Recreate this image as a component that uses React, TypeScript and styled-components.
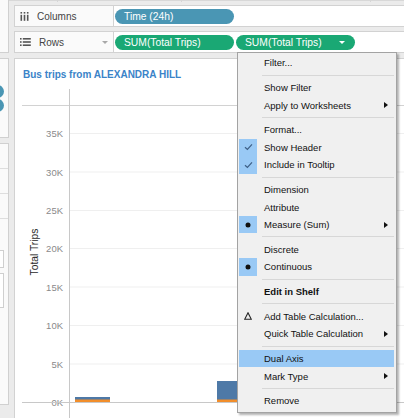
import styled, { createGlobalStyle } from 'styled-components'

const GlobalStyle = createGlobalStyle`
  html, body {
    margin: 0;
    padding: 0;
    background: #ebebeb;
  }
  body {
    font-family: "Liberation Sans", Arial, sans-serif;
  }
`

type Mark = 'check' | 'dot' | 'delta'

interface MenuEntry {
  label?: string
  sep?: boolean
  mark?: Mark
  sub?: boolean
  bold?: boolean
  active?: boolean
}

const menu: MenuEntry[] = [
  { label: 'Filter...' },
  { sep: true },
  { label: 'Show Filter' },
  { label: 'Apply to Worksheets', sub: true },
  { sep: true },
  { label: 'Format...' },
  { label: 'Show Header', mark: 'check' },
  { label: 'Include in Tooltip', mark: 'check' },
  { sep: true },
  { label: 'Dimension' },
  { label: 'Attribute' },
  { label: 'Measure (Sum)', mark: 'dot', sub: true },
  { sep: true },
  { label: 'Discrete' },
  { label: 'Continuous', mark: 'dot' },
  { sep: true },
  { label: 'Edit in Shelf', bold: true },
  { sep: true },
  { label: 'Add Table Calculation...', mark: 'delta' },
  { label: 'Quick Table Calculation', sub: true },
  { sep: true },
  { label: 'Dual Axis', active: true },
  { label: 'Mark Type', sub: true },
  { sep: true },
  { label: 'Remove' },
]

const ticks = [
  { label: '35K', y: 133.5 },
  { label: '30K', y: 172 },
  { label: '25K', y: 210.5 },
  { label: '20K', y: 248.5 },
  { label: '15K', y: 287 },
  { label: '10K', y: 325.5 },
  { label: '5K', y: 364 },
]

const bars = [
  { x: 75, w: 35, top: 397 },
  { x: 217, w: 30, top: 381 },
]

const ColumnsIcon = () => (
  <svg width="9" height="9" viewBox="0 0 9 9">
    <rect x="0.5" y="0" width="1.6" height="1.6" fill="#555" />
    <rect x="3.7" y="0" width="1.6" height="1.6" fill="#555" />
    <rect x="6.9" y="0" width="1.6" height="1.6" fill="#555" />
    <rect x="0.5" y="2.8" width="1.6" height="6" fill="#555" />
    <rect x="3.7" y="2.8" width="1.6" height="6" fill="#555" />
    <rect x="6.9" y="2.8" width="1.6" height="6" fill="#555" />
  </svg>
)

const RowsIcon = () => (
  <svg width="11" height="8" viewBox="0 0 11 8">
    <rect x="0" y="0" width="1.6" height="1.6" fill="#555" />
    <rect x="0" y="3.2" width="1.6" height="1.6" fill="#555" />
    <rect x="0" y="6.4" width="1.6" height="1.6" fill="#555" />
    <rect x="2.8" y="0" width="8" height="1.6" fill="#555" />
    <rect x="2.8" y="3.2" width="8" height="1.6" fill="#555" />
    <rect x="2.8" y="6.4" width="8" height="1.6" fill="#555" />
  </svg>
)

const MarkIcon = ({ mark }: { mark: Mark }) => {
  if (mark === 'check')
    return (
      <svg width="9" height="8" viewBox="0 0 9 8">
        <polyline points="1,4.2 3.4,6.5 8,1.3" fill="none" stroke="#3d5f86" strokeWidth="1.2" />
      </svg>
    )
  if (mark === 'dot')
    return (
      <svg width="6" height="6" viewBox="0 0 6 6">
        <circle cx="3" cy="3" r="2.5" fill="#111" />
      </svg>
    )
  return (
    <svg width="8" height="8" viewBox="0 0 8 8">
      <polygon points="4,0.8 7.3,7.3 0.7,7.3" fill="none" stroke="#222" strokeWidth="1.1" />
    </svg>
  )
}

const App = () => {
  return (
    <Screen>
      <GlobalStyle />
      <Sidebar>
        <SideCard $h={53} />
        <SideCard $h={80}>
          <LegendDot />
          <LegendDot />
        </SideCard>
        <SideCard $h={262}>
          <SideRow />
          <SideRow />
          <SideRow />
          <SideInput $h={16} $gap={7} />
          <SideInput $h={33} $gap={5} />
        </SideCard>
      </Sidebar>

      <Main>
        <TopStrip>
          <TopCell $w={48} />
          <TopCell $w={123} />
          <TopCell $w={188} />
        </TopStrip>

        <Shelf>
          <ShelfLabel>
            <ColumnsIcon />
            <span>Columns</span>
          </ShelfLabel>
          <ShelfDrop>
            <Pill $color="#4a96b4">Time (24h)</Pill>
          </ShelfDrop>
        </Shelf>

        <Shelf>
          <ShelfLabel>
            <RowsIcon />
            <span>Rows</span>
            <ShelfCaret />
          </ShelfLabel>
          <ShelfDrop>
            <Pill $color="#1aa874">SUM(Total Trips)</Pill>
            <Pill $color="#1aa874">
              SUM(Total Trips)
              <PillCaret />
            </Pill>
          </ShelfDrop>
        </Shelf>

        <ChartPanel>
          <ChartTitle>Bus trips from ALEXANDRA HILL</ChartTitle>
          <ChartSvg viewBox="15 87 389 331">
            <line x1="22" y1="105.5" x2="404" y2="105.5" stroke="#d2d2d2" />
            {ticks.map(t => (
              <g key={t.label}>
                <line x1="70" y1={t.y} x2="404" y2={t.y} stroke="#efefef" />
                <text x="63" y={t.y + 3.5} textAnchor="end" fontSize="9.5" fill="#8a8a8a">
                  {t.label}
                </text>
              </g>
            ))}
            <text x="63" y="405.5" textAnchor="end" fontSize="9.5" fill="#8a8a8a">0K</text>
            {bars.map(b => (
              <g key={b.x}>
                <rect x={b.x} y={b.top} width={b.w} height={402 - b.top} fill="#4e79a7" />
                <rect x={b.x} y="399.5" width={b.w} height="2.5" fill="#f28e2b" />
              </g>
            ))}
            <line x1="69.5" y1="89" x2="69.5" y2="418" stroke="#c8c8c8" />
            <line x1="22" y1="402.5" x2="404" y2="402.5" stroke="#c8c8c8" />
            <text
              x="0"
              y="0"
              fontSize="10.3"
              fill="#2a2a2a"
              textAnchor="middle"
              transform="translate(37.5 252) rotate(-90)"
            >
              Total Trips
            </text>
          </ChartSvg>
        </ChartPanel>
      </Main>

      <Menu>
        {menu.map((m, i) =>
          m.sep ? (
            <Separator key={i} />
          ) : (
            <MenuItem key={i} $active={m.active}>
              <MarkCell $on={m.mark === 'check' || m.mark === 'dot'}>
                {m.mark && <MarkIcon mark={m.mark} />}
              </MarkCell>
              <MenuLabel $bold={m.bold}>{m.label}</MenuLabel>
              <SubCell>{m.sub && <SubArrow />}</SubCell>
            </MenuItem>
          )
        )}
      </Menu>
    </Screen>
  )
}

const Screen = styled.div`
  position: relative;
  width: 404px;
  height: 418px;
  overflow: hidden;
  display: flex;
  gap: 5px;
  background: #ebebeb;
`

const Sidebar = styled.div`
  width: 9px;
  flex: none;
  display: flex;
  flex-direction: column;
  gap: 5px;
`

const SideCard = styled.div<{ $h: number }>`
  height: ${p => p.$h}px;
  background: #fafafa;
  border-right: 1px solid #d0d0d0;
  border-bottom: 1px solid #d0d0d0;
  box-sizing: border-box;
  display: flex;
  flex-direction: column;
  justify-content: center;
  overflow: hidden;
  &:nth-child(2) {
    border-top: 1px solid #d0d0d0;
  }
  &:nth-child(3) {
    border-top: 1px solid #d0d0d0;
    justify-content: flex-start;
    padding-top: 24px;
  }
`

const LegendDot = styled.div`
  width: 13px;
  height: 13px;
  border-radius: 50%;
  background: #4a96b4;
  margin-left: -9px;
  margin-top: 1px;
`

const SideRow = styled.div`
  height: 25px;
  border-top: 1px solid #dedede;
  flex: none;
  box-sizing: border-box;
`

const SideInput = styled.div<{ $h: number; $gap: number }>`
  height: ${p => p.$h}px;
  flex: none;
  margin-top: ${p => p.$gap}px;
  border: 1px solid #cfcfcf;
  border-left: none;
  width: 3px;
  background: #fff;
`

const Main = styled.div`
  flex: 1;
  display: flex;
  flex-direction: column;
  gap: 4px;
  min-width: 0;
`

const TopStrip = styled.div`
  height: 0;
  display: flex;
  margin-left: -5px;
  border-bottom: 1px solid #d8d8d8;
  background: #fafafa;
  > div {
    height: 3px;
  }
`

const TopCell = styled.div<{ $w: number }>`
  width: ${p => p.$w}px;
  margin-top: -1px;
  border-right: 1px solid #d6d6d6;
`

const Shelf = styled.div`
  height: 23px;
  display: flex;
  box-sizing: border-box;
  border: 1px solid #d2d2d2;
  border-right: none;
  background: #fafafa;
`

const ShelfLabel = styled.div`
  width: 99px;
  flex: none;
  display: flex;
  align-items: center;
  gap: 8px;
  padding-left: 5px;
  box-sizing: border-box;
  border-right: 1px solid #d2d2d2;
  color: #444;
  font-size: 10px;
`

const ShelfCaret = styled.div`
  margin-left: auto;
  margin-right: 5px;
  width: 0;
  height: 0;
  border-left: 3px solid transparent;
  border-right: 3px solid transparent;
  border-top: 3px solid #a8a8a8;
`

const ShelfDrop = styled.div`
  flex: 1;
  display: flex;
  align-items: center;
  gap: 2px;
  padding-left: 1px;
  background: #fff;
`

const Pill = styled.div<{ $color: string }>`
  width: 119px;
  height: 15px;
  box-sizing: border-box;
  border-radius: 8px;
  background: ${p => p.$color};
  color: #fff;
  font-size: 10.3px;
  display: flex;
  align-items: center;
  padding-left: 9px;
  padding-right: 10px;
  white-space: nowrap;
`

const PillCaret = styled.div`
  margin-left: auto;
  width: 0;
  height: 0;
  border-left: 3px solid transparent;
  border-right: 3px solid transparent;
  border-top: 3px solid #fff;
`

const ChartPanel = styled.div`
  flex: 1;
  display: flex;
  flex-direction: column;
  background: #fff;
  border-left: 1px solid #d2d2d2;
  border-top: 1px solid #d2d2d2;
  margin-top: 1px;
`

const ChartTitle = styled.div`
  height: 28px;
  box-sizing: border-box;
  padding: 10px 0 0 8px;
  font-size: 10px;
  font-weight: bold;
  color: #3a83c8;
  white-space: nowrap;
`

const ChartSvg = styled.svg`
  display: block;
  width: 389px;
  height: 331px;
  font-family: "Liberation Sans", Arial, sans-serif;
`

const Menu = styled.div`
  position: absolute;
  left: 237px;
  top: 52px;
  width: 160px;
  box-sizing: border-box;
  padding: 1px 0 2px;
  background: #f0f0f0;
  border: 1px solid #a3a3a3;
  box-shadow: 2px 2px 2px rgba(0, 0, 0, 0.3);
  font-size: 9.5px;
  color: #111;
`

const MenuItem = styled.div<{ $active?: boolean }>`
  height: 17.5px;
  margin: 0 2px 0 1px;
  display: grid;
  grid-template-columns: 18px 1fr 12px;
  align-items: stretch;
  background: ${p => (p.$active ? '#99c9f5' : 'transparent')};
`

const MarkCell = styled.div<{ $on?: boolean }>`
  display: flex;
  align-items: center;
  justify-content: center;
  background: ${p => (p.$on ? '#99c9f5' : 'transparent')};
`

const MenuLabel = styled.div<{ $bold?: boolean }>`
  display: flex;
  align-items: center;
  padding-left: 7px;
  font-weight: ${p => (p.$bold ? 'bold' : 'normal')};
  white-space: nowrap;
`

const SubCell = styled.div`
  display: flex;
  align-items: center;
  padding-left: 2px;
`

const SubArrow = styled.div`
  width: 0;
  height: 0;
  border-top: 3px solid transparent;
  border-bottom: 3px solid transparent;
  border-left: 4px solid #111;
`

const Separator = styled.div`
  height: 7.25px;
  display: flex;
  align-items: center;
  margin: 0 2px 0 24px;
  &::after {
    content: '';
    flex: 1;
    height: 1px;
    background: #d7d7d7;
  }
`

export default App
